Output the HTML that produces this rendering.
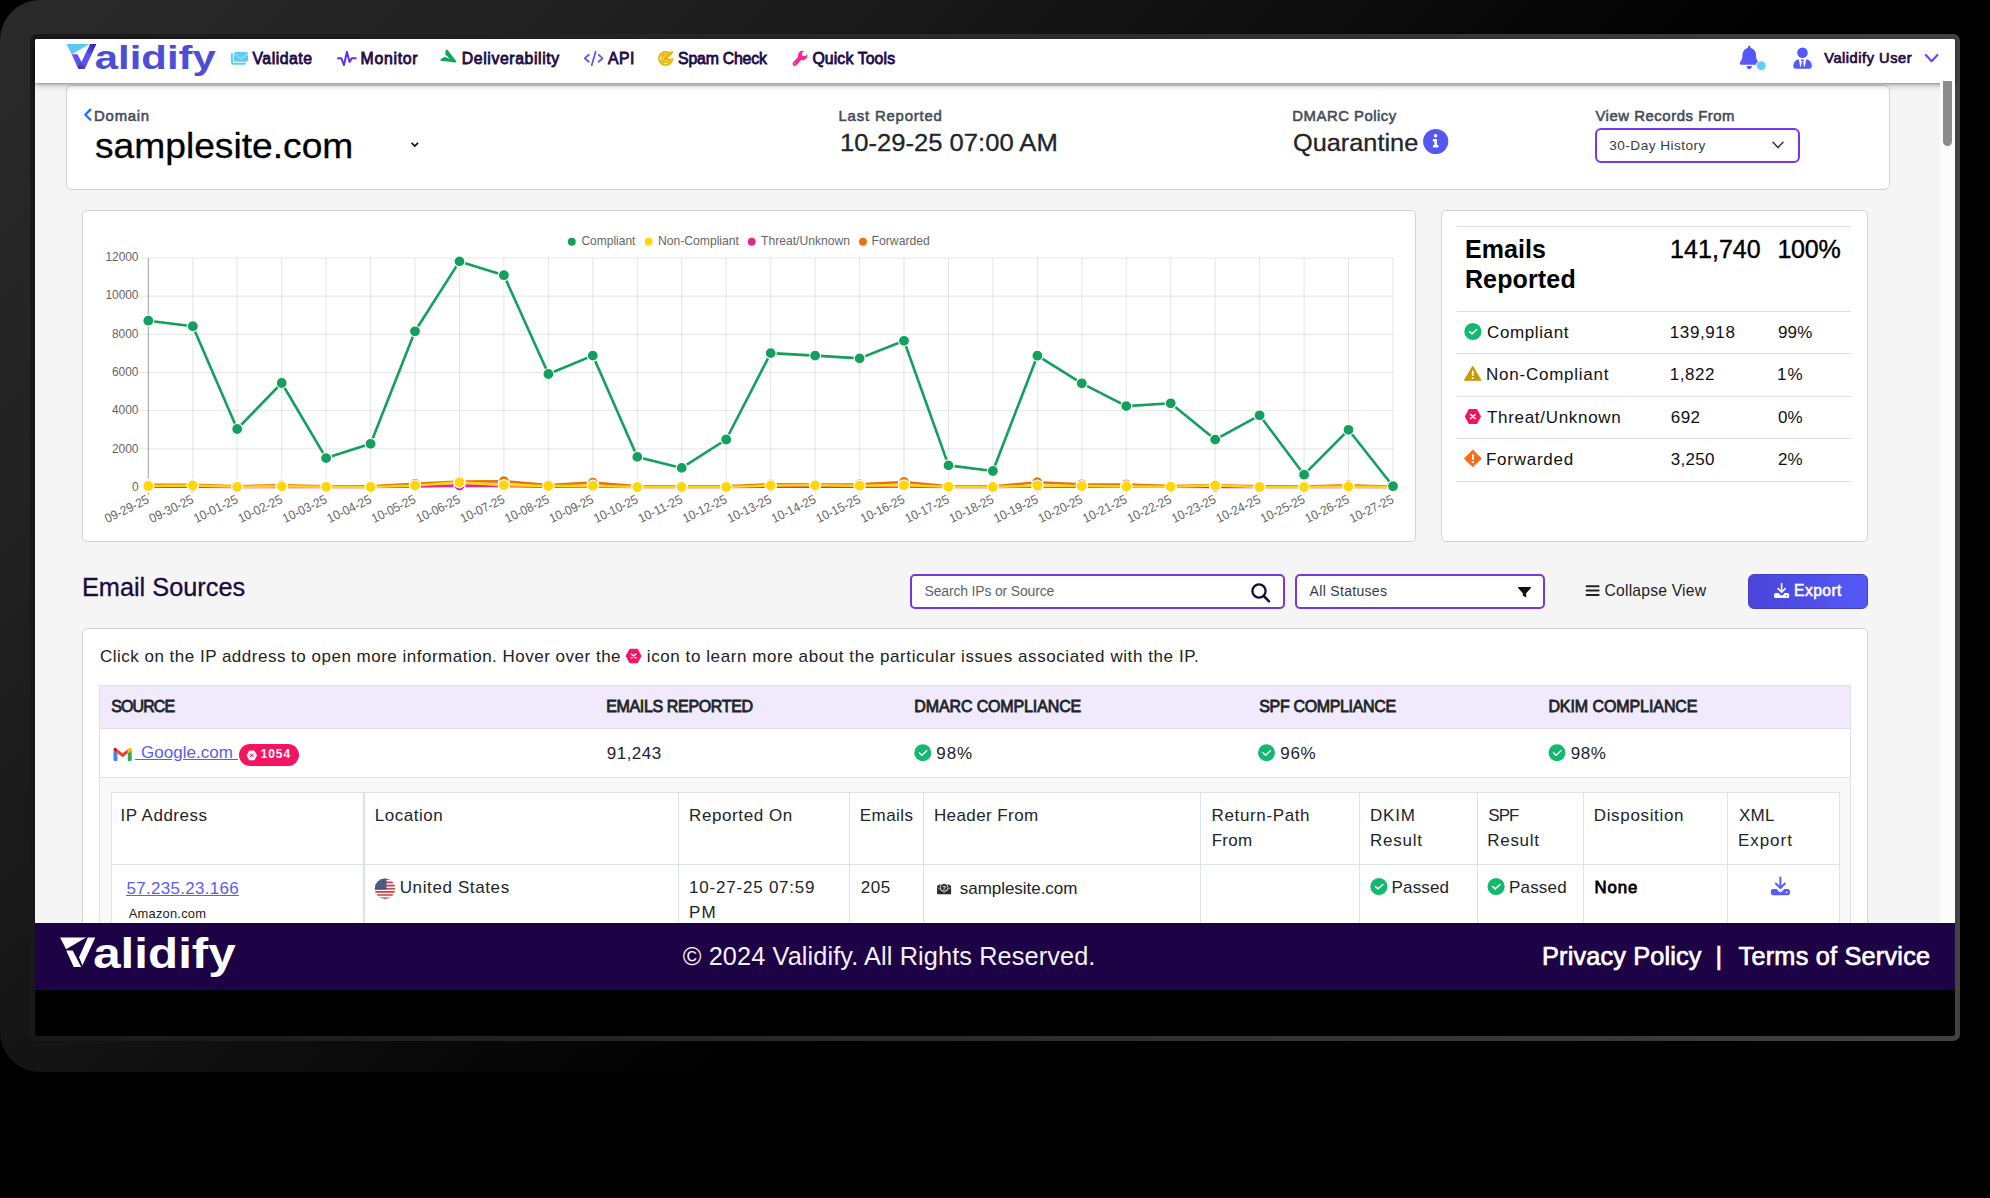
<!DOCTYPE html>
<html lang="en"><head><meta charset="utf-8"><title>Validify - DMARC Monitor</title>
<style>
*{box-sizing:border-box;margin:0;padding:0}
html,body{width:1990px;height:1198px;background:#000;overflow:hidden}
body{position:relative;font-family:"Liberation Sans",sans-serif;-webkit-font-smoothing:antialiased}
.abs{position:absolute;display:block}
.t{position:absolute;white-space:pre;line-height:1;font-family:"Liberation Sans",sans-serif}
.s3{-webkit-text-stroke:.3px currentColor}
.s4{-webkit-text-stroke:.4px currentColor}
.s5{-webkit-text-stroke:.55px currentColor}
.s6{-webkit-text-stroke:.7px currentColor}
.s7{-webkit-text-stroke:.8px currentColor}
.box{position:absolute;background:#fff;border:1px solid #d3d3d6;border-radius:6px}
.ln{position:absolute;background:#dee2e6}
</style></head>
<body>
<div class="abs" style="left:0px;top:0px;width:1962.0px;height:1072.0px;border-radius:40px 8px 8px 40px;background:linear-gradient(135deg,#2a2a2a 0%,#222 17%,#161616 33.5%,#080808 50%,#000 60%)"></div>
<div class="abs" style="left:30px;top:34px;width:1930.0px;height:1006.5px;border-radius:7px;background:linear-gradient(90deg,#181818 0%,#2c2c2c 50%,#424242 100%)"></div>
<div class="abs" style="left:35px;top:39px;width:1920.0px;height:996.5px;border-radius:2px;background:#000"></div>
<div class="abs" style="left:35px;top:39px;width:1920.0px;height:884.3px;background:#f5f5f5;border-radius:2px 2px 0 0"></div>
<div class="box" style="left:66px;top:85.4px;width:1824.0px;height:104.4px;"></div>
<div class="box" style="left:82.4px;top:209.6px;width:1333.6px;height:332.6px;border-radius:5px"></div>
<div class="box" style="left:1440.6px;top:209.6px;width:427.2px;height:332.6px;border-radius:5px"></div>
<div class="abs" style="left:1457px;top:225.8px;width:393.8px;height:1.2px;background:#dedee8"></div>
<div class="abs" style="left:1457px;top:310.9px;width:393.8px;height:1.2px;background:#dedee8"></div>
<div class="abs" style="left:1457px;top:352.9px;width:393.8px;height:1.2px;background:#dedee8"></div>
<div class="abs" style="left:1457px;top:395.9px;width:393.8px;height:1.2px;background:#dedee8"></div>
<div class="abs" style="left:1457px;top:438.0px;width:393.8px;height:1.2px;background:#dedee8"></div>
<div class="abs" style="left:1457px;top:481.0px;width:393.8px;height:1.2px;background:#dedee8"></div>
<div class="abs" style="left:1595px;top:128.1px;width:205.0px;height:34.6px;background:#fff;border:2px solid #7a35f2;border-radius:6px"></div>
<div class="abs" style="left:910px;top:574px;width:375.0px;height:34.6px;background:#fff;border:2px solid #7238e6;border-radius:5px"></div>
<div class="abs" style="left:1295px;top:574px;width:250.0px;height:34.6px;background:#fff;border:2px solid #7238e6;border-radius:5px"></div>
<div class="abs" style="left:1748.2px;top:574.1px;width:119.8px;height:34.5px;background:linear-gradient(90deg,#4a45d8,#5359f6);border:1px solid #4540c8;border-radius:6px"></div>
<div class="box" style="left:82.4px;top:627.6px;width:1785.6px;height:312.4px;border-radius:5px 5px 0 0"></div>
<div class="abs" style="left:99.3px;top:685.2px;width:1751.5px;height:44.1px;background:#f0eafc;border:1px solid #e2dcf0"></div>
<div class="abs" style="left:99.3px;top:729.3px;width:1751.5px;height:48.3px;background:#fff;border:1px solid #dee2e6;border-top:0"></div>
<div class="abs" style="left:99.3px;top:777.6px;width:1751.5px;height:152.4px;background:#f8f8f9;border:1px solid #dee2e6;border-top:0"></div>
<div class="abs" style="left:110.6px;top:792.4px;width:1729.2px;height:137.6px;background:#fff;border:1px solid #dee2e6"></div>
<div class="ln" style="left:110.6px;top:863.8px;width:1729.2px;height:1.2px;"></div>
<div class="ln" style="left:363.4px;top:792.4px;width:1.2px;height:137.6px;"></div>
<div class="ln" style="left:677.6px;top:792.4px;width:1.2px;height:137.6px;"></div>
<div class="ln" style="left:848.9px;top:792.4px;width:1.2px;height:137.6px;"></div>
<div class="ln" style="left:922.8px;top:792.4px;width:1.2px;height:137.6px;"></div>
<div class="ln" style="left:1199.9px;top:792.4px;width:1.2px;height:137.6px;"></div>
<div class="ln" style="left:1358.8000000000002px;top:792.4px;width:1.2px;height:137.6px;"></div>
<div class="ln" style="left:1476.7px;top:792.4px;width:1.2px;height:137.6px;"></div>
<div class="ln" style="left:1582.6000000000001px;top:792.4px;width:1.2px;height:137.6px;"></div>
<div class="ln" style="left:1726.8000000000002px;top:792.4px;width:1.2px;height:137.6px;"></div>
<div class="abs" style="left:135.2px;top:758.7px;width:36.8px;height:1.1px;background:#5b5cf2"></div>
<div class="abs" style="left:182.8px;top:758.7px;width:55.6px;height:1.1px;background:#5b5cf2"></div>
<div class="abs" style="left:126px;top:894.9px;width:113.0px;height:1.1px;background:#5b5cf2"></div>
<div class="abs" style="left:35px;top:923.3px;width:1920.0px;height:67.1px;background:#1d0245"></div>
<svg class="abs" style="left:84px;top:211px" width="1331" height="330" viewBox="84 211 1331 330" font-family="Liberation Sans, sans-serif">
<path d="M138.3 258.1H1393M138.3 296.2H1393M138.3 334.4H1393M138.3 372.6H1393M138.3 410.7H1393M138.3 448.9H1393M138.3 487.0H1393M148.3 258.1V495.0M192.8 258.1V495.0M237.2 258.1V495.0M281.7 258.1V495.0M326.1 258.1V495.0M370.6 258.1V495.0M415.0 258.1V495.0M459.5 258.1V495.0M503.9 258.1V495.0M548.4 258.1V495.0M592.8 258.1V495.0M637.3 258.1V495.0M681.7 258.1V495.0M726.2 258.1V495.0M770.7 258.1V495.0M815.1 258.1V495.0M859.6 258.1V495.0M904.0 258.1V495.0M948.5 258.1V495.0M992.9 258.1V495.0M1037.4 258.1V495.0M1081.8 258.1V495.0M1126.3 258.1V495.0M1170.7 258.1V495.0M1215.2 258.1V495.0M1259.6 258.1V495.0M1304.1 258.1V495.0M1348.5 258.1V495.0M1393.0 258.1V495.0" stroke="#000" stroke-opacity=".1" stroke-width="1" fill="none"/>
<path d="M148.3 258.1V495.0" stroke="#000" stroke-opacity=".3" stroke-width="1" fill="none"/>
<text x="105.4" y="260.9" font-size="12.8" fill="#666" textLength="33.1" lengthAdjust="spacingAndGlyphs">12000</text>
<text x="105.4" y="299.3" font-size="12.8" fill="#666" textLength="33.1" lengthAdjust="spacingAndGlyphs">10000</text>
<text x="112.0" y="337.7" font-size="12.8" fill="#666" textLength="26.5" lengthAdjust="spacingAndGlyphs">8000</text>
<text x="112.0" y="376.1" font-size="12.8" fill="#666" textLength="26.5" lengthAdjust="spacingAndGlyphs">6000</text>
<text x="112.0" y="414.4" font-size="12.8" fill="#666" textLength="26.5" lengthAdjust="spacingAndGlyphs">4000</text>
<text x="112.0" y="452.8" font-size="12.8" fill="#666" textLength="26.5" lengthAdjust="spacingAndGlyphs">2000</text>
<text x="131.9" y="491.2" font-size="12.8" fill="#666" textLength="6.6" lengthAdjust="spacingAndGlyphs">0</text>
<text transform="translate(148.1 498.4) rotate(-26)" x="-47.6" y="4.4" font-size="12.8" fill="#666" textLength="47.6" lengthAdjust="spacingAndGlyphs">09-29-25</text>
<text transform="translate(192.6 498.4) rotate(-26)" x="-47.6" y="4.4" font-size="12.8" fill="#666" textLength="47.6" lengthAdjust="spacingAndGlyphs">09-30-25</text>
<text transform="translate(237.0 498.4) rotate(-26)" x="-47.6" y="4.4" font-size="12.8" fill="#666" textLength="47.6" lengthAdjust="spacingAndGlyphs">10-01-25</text>
<text transform="translate(281.5 498.4) rotate(-26)" x="-47.6" y="4.4" font-size="12.8" fill="#666" textLength="47.6" lengthAdjust="spacingAndGlyphs">10-02-25</text>
<text transform="translate(325.9 498.4) rotate(-26)" x="-47.6" y="4.4" font-size="12.8" fill="#666" textLength="47.6" lengthAdjust="spacingAndGlyphs">10-03-25</text>
<text transform="translate(370.4 498.4) rotate(-26)" x="-47.6" y="4.4" font-size="12.8" fill="#666" textLength="47.6" lengthAdjust="spacingAndGlyphs">10-04-25</text>
<text transform="translate(414.8 498.4) rotate(-26)" x="-47.6" y="4.4" font-size="12.8" fill="#666" textLength="47.6" lengthAdjust="spacingAndGlyphs">10-05-25</text>
<text transform="translate(459.3 498.4) rotate(-26)" x="-47.6" y="4.4" font-size="12.8" fill="#666" textLength="47.6" lengthAdjust="spacingAndGlyphs">10-06-25</text>
<text transform="translate(503.7 498.4) rotate(-26)" x="-47.6" y="4.4" font-size="12.8" fill="#666" textLength="47.6" lengthAdjust="spacingAndGlyphs">10-07-25</text>
<text transform="translate(548.2 498.4) rotate(-26)" x="-47.6" y="4.4" font-size="12.8" fill="#666" textLength="47.6" lengthAdjust="spacingAndGlyphs">10-08-25</text>
<text transform="translate(592.6 498.4) rotate(-26)" x="-47.6" y="4.4" font-size="12.8" fill="#666" textLength="47.6" lengthAdjust="spacingAndGlyphs">10-09-25</text>
<text transform="translate(637.1 498.4) rotate(-26)" x="-47.6" y="4.4" font-size="12.8" fill="#666" textLength="47.6" lengthAdjust="spacingAndGlyphs">10-10-25</text>
<text transform="translate(681.5 498.4) rotate(-26)" x="-47.6" y="4.4" font-size="12.8" fill="#666" textLength="47.6" lengthAdjust="spacingAndGlyphs">10-11-25</text>
<text transform="translate(726.0 498.4) rotate(-26)" x="-47.6" y="4.4" font-size="12.8" fill="#666" textLength="47.6" lengthAdjust="spacingAndGlyphs">10-12-25</text>
<text transform="translate(770.5 498.4) rotate(-26)" x="-47.6" y="4.4" font-size="12.8" fill="#666" textLength="47.6" lengthAdjust="spacingAndGlyphs">10-13-25</text>
<text transform="translate(814.9 498.4) rotate(-26)" x="-47.6" y="4.4" font-size="12.8" fill="#666" textLength="47.6" lengthAdjust="spacingAndGlyphs">10-14-25</text>
<text transform="translate(859.4 498.4) rotate(-26)" x="-47.6" y="4.4" font-size="12.8" fill="#666" textLength="47.6" lengthAdjust="spacingAndGlyphs">10-15-25</text>
<text transform="translate(903.8 498.4) rotate(-26)" x="-47.6" y="4.4" font-size="12.8" fill="#666" textLength="47.6" lengthAdjust="spacingAndGlyphs">10-16-25</text>
<text transform="translate(948.3 498.4) rotate(-26)" x="-47.6" y="4.4" font-size="12.8" fill="#666" textLength="47.6" lengthAdjust="spacingAndGlyphs">10-17-25</text>
<text transform="translate(992.7 498.4) rotate(-26)" x="-47.6" y="4.4" font-size="12.8" fill="#666" textLength="47.6" lengthAdjust="spacingAndGlyphs">10-18-25</text>
<text transform="translate(1037.2 498.4) rotate(-26)" x="-47.6" y="4.4" font-size="12.8" fill="#666" textLength="47.6" lengthAdjust="spacingAndGlyphs">10-19-25</text>
<text transform="translate(1081.6 498.4) rotate(-26)" x="-47.6" y="4.4" font-size="12.8" fill="#666" textLength="47.6" lengthAdjust="spacingAndGlyphs">10-20-25</text>
<text transform="translate(1126.1 498.4) rotate(-26)" x="-47.6" y="4.4" font-size="12.8" fill="#666" textLength="47.6" lengthAdjust="spacingAndGlyphs">10-21-25</text>
<text transform="translate(1170.5 498.4) rotate(-26)" x="-47.6" y="4.4" font-size="12.8" fill="#666" textLength="47.6" lengthAdjust="spacingAndGlyphs">10-22-25</text>
<text transform="translate(1215.0 498.4) rotate(-26)" x="-47.6" y="4.4" font-size="12.8" fill="#666" textLength="47.6" lengthAdjust="spacingAndGlyphs">10-23-25</text>
<text transform="translate(1259.4 498.4) rotate(-26)" x="-47.6" y="4.4" font-size="12.8" fill="#666" textLength="47.6" lengthAdjust="spacingAndGlyphs">10-24-25</text>
<text transform="translate(1303.9 498.4) rotate(-26)" x="-47.6" y="4.4" font-size="12.8" fill="#666" textLength="47.6" lengthAdjust="spacingAndGlyphs">10-25-25</text>
<text transform="translate(1348.3 498.4) rotate(-26)" x="-47.6" y="4.4" font-size="12.8" fill="#666" textLength="47.6" lengthAdjust="spacingAndGlyphs">10-26-25</text>
<text transform="translate(1392.8 498.4) rotate(-26)" x="-47.6" y="4.4" font-size="12.8" fill="#666" textLength="47.6" lengthAdjust="spacingAndGlyphs">10-27-25</text>
<polyline points="148.3,484.8 192.8,484.8 237.2,486.3 281.7,485.2 326.1,486.2 370.6,486.2 415.0,483.8 459.5,481.6 503.9,481.2 548.4,485 592.8,482.6 637.3,486.2 681.7,486.5 726.2,486.3 770.7,484.3 815.1,484.6 859.6,484.2 904.0,482 948.5,486.3 992.9,486.5 1037.4,482.2 1081.8,484.3 1126.3,484.5 1170.7,486 1215.2,485.4 1259.6,486.3 1304.1,486.5 1348.5,485.2 1393.0,486.8" fill="none" stroke="#e8710a" stroke-width="2.6" stroke-linejoin="round"/><g fill="#e8710a" stroke="#fff" stroke-width="1.2"><circle cx="148.3" cy="484.8" r="5.5"/><circle cx="192.8" cy="484.8" r="5.5"/><circle cx="237.2" cy="486.3" r="5.5"/><circle cx="281.7" cy="485.2" r="5.5"/><circle cx="326.1" cy="486.2" r="5.5"/><circle cx="370.6" cy="486.2" r="5.5"/><circle cx="415.0" cy="483.8" r="5.5"/><circle cx="459.5" cy="481.6" r="5.5"/><circle cx="503.9" cy="481.2" r="5.5"/><circle cx="548.4" cy="485" r="5.5"/><circle cx="592.8" cy="482.6" r="5.5"/><circle cx="637.3" cy="486.2" r="5.5"/><circle cx="681.7" cy="486.5" r="5.5"/><circle cx="726.2" cy="486.3" r="5.5"/><circle cx="770.7" cy="484.3" r="5.5"/><circle cx="815.1" cy="484.6" r="5.5"/><circle cx="859.6" cy="484.2" r="5.5"/><circle cx="904.0" cy="482" r="5.5"/><circle cx="948.5" cy="486.3" r="5.5"/><circle cx="992.9" cy="486.5" r="5.5"/><circle cx="1037.4" cy="482.2" r="5.5"/><circle cx="1081.8" cy="484.3" r="5.5"/><circle cx="1126.3" cy="484.5" r="5.5"/><circle cx="1170.7" cy="486" r="5.5"/><circle cx="1215.2" cy="485.4" r="5.5"/><circle cx="1259.6" cy="486.3" r="5.5"/><circle cx="1304.1" cy="486.5" r="5.5"/><circle cx="1348.5" cy="485.2" r="5.5"/><circle cx="1393.0" cy="486.8" r="5.5"/></g>
<polyline points="148.3,486.7 192.8,486.7 237.2,487 281.7,486.9 326.1,487 370.6,487 415.0,486.4 459.5,485.6 503.9,486 548.4,486.7 592.8,486.5 637.3,487 681.7,487 726.2,487 770.7,486.6 815.1,486.6 859.6,486.6 904.0,486.4 948.5,487 992.9,487 1037.4,486.5 1081.8,486.7 1126.3,486.8 1170.7,486.6 1215.2,486.9 1259.6,487 1304.1,487 1348.5,486.9 1393.0,487" fill="none" stroke="#e52592" stroke-width="2.6" stroke-linejoin="round"/><g fill="#e52592" stroke="#fff" stroke-width="1.2"><circle cx="148.3" cy="486.7" r="5.5"/><circle cx="192.8" cy="486.7" r="5.5"/><circle cx="237.2" cy="487" r="5.5"/><circle cx="281.7" cy="486.9" r="5.5"/><circle cx="326.1" cy="487" r="5.5"/><circle cx="370.6" cy="487" r="5.5"/><circle cx="415.0" cy="486.4" r="5.5"/><circle cx="459.5" cy="485.6" r="5.5"/><circle cx="503.9" cy="486" r="5.5"/><circle cx="548.4" cy="486.7" r="5.5"/><circle cx="592.8" cy="486.5" r="5.5"/><circle cx="637.3" cy="487" r="5.5"/><circle cx="681.7" cy="487" r="5.5"/><circle cx="726.2" cy="487" r="5.5"/><circle cx="770.7" cy="486.6" r="5.5"/><circle cx="815.1" cy="486.6" r="5.5"/><circle cx="859.6" cy="486.6" r="5.5"/><circle cx="904.0" cy="486.4" r="5.5"/><circle cx="948.5" cy="487" r="5.5"/><circle cx="992.9" cy="487" r="5.5"/><circle cx="1037.4" cy="486.5" r="5.5"/><circle cx="1081.8" cy="486.7" r="5.5"/><circle cx="1126.3" cy="486.8" r="5.5"/><circle cx="1170.7" cy="486.6" r="5.5"/><circle cx="1215.2" cy="486.9" r="5.5"/><circle cx="1259.6" cy="487" r="5.5"/><circle cx="1304.1" cy="487" r="5.5"/><circle cx="1348.5" cy="486.9" r="5.5"/><circle cx="1393.0" cy="487" r="5.5"/></g>
<polyline points="148.3,486 192.8,485.5 237.2,486.8 281.7,486.4 326.1,486.8 370.6,487 415.0,485.5 459.5,482.3 503.9,485.1 548.4,486 592.8,485.7 637.3,487 681.7,487 726.2,487 770.7,485.5 815.1,485.3 859.6,485.7 904.0,485.3 948.5,486.8 992.9,487 1037.4,485.5 1081.8,486 1126.3,486.4 1170.7,486.8 1215.2,485.5 1259.6,487 1304.1,487 1348.5,486.6 1393.0,487" fill="none" stroke="#ffd60a" stroke-width="2.6" stroke-linejoin="round"/><g fill="#ffd60a" stroke="#fff" stroke-width="1.2"><circle cx="148.3" cy="486" r="5.5"/><circle cx="192.8" cy="485.5" r="5.5"/><circle cx="237.2" cy="486.8" r="5.5"/><circle cx="281.7" cy="486.4" r="5.5"/><circle cx="326.1" cy="486.8" r="5.5"/><circle cx="370.6" cy="487" r="5.5"/><circle cx="415.0" cy="485.5" r="5.5"/><circle cx="459.5" cy="482.3" r="5.5"/><circle cx="503.9" cy="485.1" r="5.5"/><circle cx="548.4" cy="486" r="5.5"/><circle cx="592.8" cy="485.7" r="5.5"/><circle cx="637.3" cy="487" r="5.5"/><circle cx="681.7" cy="487" r="5.5"/><circle cx="726.2" cy="487" r="5.5"/><circle cx="770.7" cy="485.5" r="5.5"/><circle cx="815.1" cy="485.3" r="5.5"/><circle cx="859.6" cy="485.7" r="5.5"/><circle cx="904.0" cy="485.3" r="5.5"/><circle cx="948.5" cy="486.8" r="5.5"/><circle cx="992.9" cy="487" r="5.5"/><circle cx="1037.4" cy="485.5" r="5.5"/><circle cx="1081.8" cy="486" r="5.5"/><circle cx="1126.3" cy="486.4" r="5.5"/><circle cx="1170.7" cy="486.8" r="5.5"/><circle cx="1215.2" cy="485.5" r="5.5"/><circle cx="1259.6" cy="487" r="5.5"/><circle cx="1304.1" cy="487" r="5.5"/><circle cx="1348.5" cy="486.6" r="5.5"/><circle cx="1393.0" cy="487" r="5.5"/></g>
<polyline points="148.3,320.7 192.8,326.2 237.2,429 281.7,383 326.1,458.1 370.6,443.8 415.0,331.3 459.5,261.4 503.9,275.2 548.4,374 592.8,355.6 637.3,456.9 681.7,467.9 726.2,439.5 770.7,353.1 815.1,355.6 859.6,358.4 904.0,340.8 948.5,465.4 992.9,471 1037.4,355.7 1081.8,383.3 1126.3,406.1 1170.7,403.3 1215.2,439.6 1259.6,415.3 1304.1,474.7 1348.5,429.8 1393.0,486.2" fill="none" stroke="#12a05c" stroke-width="2.6" stroke-linejoin="round"/><g fill="#12a05c" stroke="#fff" stroke-width="1.2"><circle cx="148.3" cy="320.7" r="5.5"/><circle cx="192.8" cy="326.2" r="5.5"/><circle cx="237.2" cy="429" r="5.5"/><circle cx="281.7" cy="383" r="5.5"/><circle cx="326.1" cy="458.1" r="5.5"/><circle cx="370.6" cy="443.8" r="5.5"/><circle cx="415.0" cy="331.3" r="5.5"/><circle cx="459.5" cy="261.4" r="5.5"/><circle cx="503.9" cy="275.2" r="5.5"/><circle cx="548.4" cy="374" r="5.5"/><circle cx="592.8" cy="355.6" r="5.5"/><circle cx="637.3" cy="456.9" r="5.5"/><circle cx="681.7" cy="467.9" r="5.5"/><circle cx="726.2" cy="439.5" r="5.5"/><circle cx="770.7" cy="353.1" r="5.5"/><circle cx="815.1" cy="355.6" r="5.5"/><circle cx="859.6" cy="358.4" r="5.5"/><circle cx="904.0" cy="340.8" r="5.5"/><circle cx="948.5" cy="465.4" r="5.5"/><circle cx="992.9" cy="471" r="5.5"/><circle cx="1037.4" cy="355.7" r="5.5"/><circle cx="1081.8" cy="383.3" r="5.5"/><circle cx="1126.3" cy="406.1" r="5.5"/><circle cx="1170.7" cy="403.3" r="5.5"/><circle cx="1215.2" cy="439.6" r="5.5"/><circle cx="1259.6" cy="415.3" r="5.5"/><circle cx="1304.1" cy="474.7" r="5.5"/><circle cx="1348.5" cy="429.8" r="5.5"/><circle cx="1393.0" cy="486.2" r="5.5"/></g>
<circle cx="571.8" cy="241.8" r="3.95" fill="#12a05c"/>
<circle cx="648.7" cy="241.8" r="3.95" fill="#ffd60a"/>
<circle cx="751.7" cy="241.8" r="3.95" fill="#e52592"/>
<circle cx="863" cy="241.8" r="3.95" fill="#e8710a"/>
<text x="581.4" y="245" font-size="12.8" fill="#666" textLength="54.0" lengthAdjust="spacingAndGlyphs">Compliant</text>
<text x="658.0" y="245" font-size="12.8" fill="#666" textLength="80.9" lengthAdjust="spacingAndGlyphs">Non-Compliant</text>
<text x="761.1" y="245" font-size="12.8" fill="#666" textLength="88.8" lengthAdjust="spacingAndGlyphs">Threat/Unknown</text>
<text x="871.6" y="245" font-size="12.8" fill="#666" textLength="58.2" lengthAdjust="spacingAndGlyphs">Forwarded</text>
</svg>
<div class="abs" style="left:35px;top:39px;width:1920px;height:44px;background:#fff;border-radius:2px 2px 0 0;box-shadow:0 1px 3px rgba(0,0,0,.3),0 3px 6px rgba(0,0,0,.2)"></div>
<div class="abs" style="left:1940px;top:83px;width:15.0px;height:840.3px;background:#fcfcfc"></div>
<div class="abs" style="left:1943.2px;top:81px;width:8.7px;height:65.0px;background:#8b8b8b;border-radius:0 0 4.5px 4.5px"></div>
<svg class="abs" style="left:60px;top:40px" width="170" height="42" viewBox="60 40 170 42" ><defs><linearGradient id="lg1" gradientUnits="userSpaceOnUse" x1="96" y1="44" x2="81" y2="69"><stop offset="0" stop-color="#33229a"/><stop offset=".5" stop-color="#5258f8"/><stop offset=".8" stop-color="#6a4ce8"/><stop offset="1" stop-color="#3b2a9c"/></linearGradient>
<linearGradient id="lg2" gradientUnits="userSpaceOnUse" x1="72" y1="54" x2="82" y2="69"><stop offset="0" stop-color="#7a4cf0"/><stop offset=".6" stop-color="#4f55f5"/><stop offset="1" stop-color="#3a2a9a"/></linearGradient></defs><polygon points="66.4,44 89.6,44 71.7,54.4" fill="#5bc9f5"/>
<polygon points="71.7,54.3 77.5,54.3 84.9,68.8 78.3,68.8" fill="url(#lg2)"/>
<polygon points="90.2,44 96.4,44 84.9,68.8 78.1,68.8" fill="url(#lg1)"/>
<text x="94.8" y="68.9" font-family="Liberation Sans, sans-serif" font-weight="700" font-size="33.9" fill="#4e4dd8" textLength="121" lengthAdjust="spacingAndGlyphs">alidify</text></svg>
<svg class="abs" style="left:56px;top:930px" width="190" height="54" viewBox="56 930 190 54" ><polygon points="60.1,937.5 86.2,937.5 66.1,949.2" fill="#fff"/>
<polygon points="66.2,950.6 72.7,950.6 81.2,966.9 73.7,966.9" fill="#fff"/>
<polygon points="87.8,937.5 95.3,937.5 82.4,965.4 79.1,957.2" fill="#fff"/>
<text x="93.2" y="967.5" font-family="Liberation Sans, sans-serif" font-weight="700" font-size="41.6" fill="#fff" textLength="142.5" lengthAdjust="spacingAndGlyphs">alidify</text></svg>
<svg class="abs" style="left:228px;top:48px" width="24" height="20" viewBox="228 48 24 20" ><rect x="233.9" y="51.9" width="14.1" height="9.9" rx="1.7" fill="#5ccbf5"/>
<path d="M234 54.1 L240.9 58.7 L248 54.1" stroke="#fff" stroke-opacity=".75" stroke-width=".75" fill="none"/>
<path d="M231.9 54.2 V61.4 a2.4 2.4 0 0 0 2.4 2.4 H244.8" stroke="#5ccbf5" stroke-width="2" stroke-linecap="round" fill="none"/></svg>
<svg class="abs" style="left:334px;top:48px" width="26" height="20" viewBox="334 48 26 20" ><path d="M338 58.2 H341.2 L344 65 L346.9 51.7 L349.6 62 L351.8 58.2 H355.7" stroke="#6232e6" stroke-width="2" stroke-linecap="round" stroke-linejoin="round" fill="none"/></svg>
<svg class="abs" style="left:436px;top:46px" width="24" height="20" viewBox="436 46 24 20" ><path d="M445.8 50 Q446.8 49 447.8 50.3 L456.3 61.2 Q456.9 62.6 455.3 62.5 L441 60.8 Q439.6 60.3 440.6 59.2 L443.8 57.2 Q444.8 56.7 445.8 57.2 L449.9 59 L445.6 54.8 Q445.2 54.2 445.3 53.5 Z" fill="#0fa460"/></svg>
<svg class="abs" style="left:582px;top:48px" width="24" height="20" viewBox="582 48 24 20" ><path d="M588.8 54.8 L584.7 58.4 L588.8 61.8 M595.6 51.7 L591.8 65.1 M598.7 54.8 L602.6 58.4 L598.7 61.8" stroke="#5558f8" stroke-width="1.8" stroke-linecap="round" stroke-linejoin="round" fill="none"/></svg>
<svg class="abs" style="left:655px;top:47px" width="24" height="22" viewBox="655 47 24 22" ><circle cx="665.7" cy="58.5" r="7.6" fill="#e6b400"/>
<polygon points="667.8,57.4 674.5,52.8 674.5,58.1 668.4,58.7" fill="#fff"/>
<circle cx="665.7" cy="58.5" r="5.2" fill="none" stroke="#fff" stroke-opacity=".85" stroke-width=".7" stroke-dasharray="2.2 .8" transform="rotate(35 665.7 58.5)" pathLength="40" />
<circle cx="665.7" cy="58.5" r="2.8" fill="none" stroke="#fff" stroke-opacity=".8" stroke-width=".65" stroke-dasharray="11 5" transform="rotate(60 665.7 58.5)"/>
<polygon points="665.7,58.5 673.5,50.5 675,56.5" fill="#e6b400" opacity="0"/>
<path d="M666 58.2 L672.1 52" stroke="#e6b400" stroke-width="2.4" stroke-linecap="round"/>
<path d="M660.6 56.9 l.9 1.5 -.9 1.5 -.9 -1.5z M665.7 62.7 l1.5 .9 -1.5 .9 -1.5 -.9z" fill="#fff"/></svg>
<svg class="abs" style="left:790px;top:48px" width="22" height="20" viewBox="790 48 22 20" ><path d="M794.7 63.7 L801.3 56.8" stroke="#ff2295" stroke-width="4.3" stroke-linecap="round"/>
<circle cx="802.7" cy="55.5" r="4.7" fill="#ff2295"/>
<circle cx="804.2" cy="54" r="2.3" fill="#fff"/>
<path d="M804.2 54 L808.5 49.5" stroke="#fff" stroke-width="4.4"/>
<circle cx="794.6" cy="63.6" r=".65" fill="#fff"/></svg>
<svg class="abs" style="left:1736px;top:43px" width="34" height="30" viewBox="1736 43 34 30" ><g transform="translate(1739.7 45.7) scale(0.0426 0.0455)"><path d="M224 0c-17.7 0-32 14.300-32 32V51.200C119 66 64 130.600 64 208v18.800c0 47-17.300 92.400-48.500 127.600l-7.400 8.300c-8.400 9.400-10.400 22.900-5.300 34.400S19.400 416 32 416H416c12.600 0 24-7.400 29.200-18.900s3.100-25-5.300-34.400l-7.400-8.300C401.300 319.200 384 273.900 384 226.800V208c0-77.400-55-142-128-156.800V32c0-17.700-14.300-32-32-32zm45.300 493.300c12-12 18.700-28.300 18.700-45.300H224 160c0 17 6.700 33.300 18.700 45.300s28.300 18.700 45.300 18.700s33.300-6.700 45.300-18.700z" fill="#5558fa"/></g>
<circle cx="1761.3" cy="65.8" r="5.5" fill="#fff"/><circle cx="1761.3" cy="65.8" r="4.5" fill="#62d0f5"/></svg>
<svg class="abs" style="left:1790px;top:45px" width="26" height="26" viewBox="1790 45 26 26" ><circle cx="1802.5" cy="52.8" r="5.3" fill="#5558fa"/>
<path d="M1793.3 66.3 C1793.3 62 1796.2 59.3 1799.6 59.3 H1805.4 C1808.9 59.3 1811.8 62 1811.8 66.3 Q1811.8 68.8 1809.4 68.8 H1795.7 Q1793.3 68.8 1793.3 66.3 Z" fill="#5558fa"/>
<polygon points="1798.7,59.1 1806.3,59.1 1804.7,67 1800.3,67" fill="#fff"/>
<rect x="1801" y="59.4" width="3" height="1.9" rx=".5" fill="#5558fa"/>
<polygon points="1802,61.4 1803,61.4 1804.4,68 1800.6,68" fill="#5558fa"/></svg>
<svg class="abs" style="left:1922px;top:50px" width="20" height="16" viewBox="1922 50 20 16" ><path d="M1925.8 55 L1931.6 61.2 L1937.4 55" stroke="#7a3ff0" stroke-width="2.1" stroke-linecap="round" stroke-linejoin="round" fill="none"/></svg>
<svg class="abs" style="left:80px;top:104px" width="16" height="22" viewBox="80 104 16 22" ><path d="M90.4 109.6 L85.3 114.7 L90.4 119.7" stroke="#1a6dff" stroke-width="2.2" stroke-linecap="round" stroke-linejoin="round" fill="none"/></svg>
<svg class="abs" style="left:406px;top:138px" width="18" height="14" viewBox="406 138 18 14" ><path d="M411.6 142.8 L414.8 146 L418 142.8" stroke="#111" stroke-width="1.7" fill="none"/></svg>
<svg class="abs" style="left:1420px;top:126px" width="32" height="32" viewBox="1420 126 32 32" ><circle cx="1435.7" cy="141.5" r="12.6" fill="#5558f0"/>
<circle cx="1435.6" cy="135.8" r="1.75" fill="#fff"/>
<path d="M1432.9 139 H1436.9 V145 H1438.4 V147.4 H1432.9 V145 H1434.4 V141.4 H1432.9 Z" fill="#fff"/></svg>
<svg class="abs" style="left:1768px;top:138px" width="20" height="14" viewBox="1768 138 20 14" ><path d="M1773 142.3 L1778 147.6 L1783 142.3" stroke="#333" stroke-width="1.5" stroke-linecap="round" stroke-linejoin="round" fill="none"/></svg>
<svg class="abs" style="left:1460px;top:320px" width="26" height="150" viewBox="1460 320 26 150" ><circle cx="1472.9" cy="331.5" r="8.6" fill="#12b96f"/><path d="M1469.4 331.5 L1472.0 333.9 L1476.8 329.5" stroke="#fff" stroke-width="1.5" stroke-linecap="round" stroke-linejoin="round" fill="none"/><path d="M1472.7 366.6 L1480.7 380.2 H1464.6 Z" fill="#c79a00" stroke="#c79a00" stroke-width="1.2" stroke-linejoin="round"/><rect x="1471.9" y="370.6" width="1.7" height="5.4" rx=".4" fill="#fff"/><rect x="1471.8" y="377.2" width="1.9" height="1.9" rx=".3" fill="#fff"/><polygon points="1465.4,416.5 1469.2,409.5 1476.6,409.5 1480.4,416.5 1476.6,423.5 1469.2,423.5" fill="#f6135f" stroke="#f6135f" stroke-width="1.1" stroke-linejoin="round"/><path d="M1470.6 414.5 L1475.2 418.5 M1475.2 414.5 L1470.6 418.5" stroke="#fff" stroke-width="1.6" stroke-linecap="round"/><path d="M1472.9 450.5 L1480.9 458.5 L1472.9 466.4 L1464.8 458.5 Z" fill="#ff6a1a" stroke="#ff6a1a" stroke-width="1.2" stroke-linejoin="round"/><rect x="1472" y="454" width="1.8" height="6" rx=".6" fill="#fff"/><rect x="1471.8" y="461.2" width="2.2" height="1.8" rx=".3" fill="#fff"/></svg>
<svg class="abs" style="left:622px;top:646px" width="24" height="22" viewBox="622 646 24 22" ><polygon points="626.3,656.0 630.0,649.2 637.2,649.2 640.9,656.0 637.2,662.8 630.0,662.8" fill="#f6135f" stroke="#f6135f" stroke-width="1.1" stroke-linejoin="round"/><path d="M631.4 654.0 L635.9 658.0 M635.9 654.0 L631.4 658.0" stroke="#fff" stroke-width="1.5" stroke-linecap="round"/></svg>
<svg class="abs" style="left:910px;top:742px" width="26" height="22" viewBox="910 742 26 22" ><circle cx="922.8" cy="752.8" r="8.5" fill="#12b96f"/><path d="M919.3 752.8 L921.9 755.2 L926.7 750.8" stroke="#fff" stroke-width="1.5" stroke-linecap="round" stroke-linejoin="round" fill="none"/></svg>
<svg class="abs" style="left:1254px;top:742px" width="26" height="22" viewBox="1254 742 26 22" ><circle cx="1266.5" cy="752.8" r="8.5" fill="#12b96f"/><path d="M1263.0 752.8 L1265.6 755.2 L1270.4 750.8" stroke="#fff" stroke-width="1.5" stroke-linecap="round" stroke-linejoin="round" fill="none"/></svg>
<svg class="abs" style="left:1544px;top:742px" width="26" height="22" viewBox="1544 742 26 22" ><circle cx="1557" cy="752.8" r="8.5" fill="#12b96f"/><path d="M1553.5 752.8 L1556.1 755.2 L1560.9 750.8" stroke="#fff" stroke-width="1.5" stroke-linecap="round" stroke-linejoin="round" fill="none"/></svg>
<svg class="abs" style="left:1366px;top:875px" width="26" height="22" viewBox="1366 875 26 22" ><circle cx="1378.9" cy="886.5" r="8.6" fill="#12b96f"/><path d="M1375.4 886.5 L1378.0 888.9 L1382.8 884.5" stroke="#fff" stroke-width="1.5" stroke-linecap="round" stroke-linejoin="round" fill="none"/></svg>
<svg class="abs" style="left:1483px;top:875px" width="26" height="22" viewBox="1483 875 26 22" ><circle cx="1496.1" cy="886.5" r="8.6" fill="#12b96f"/><path d="M1492.6 886.5 L1495.2 888.9 L1500.0 884.5" stroke="#fff" stroke-width="1.5" stroke-linecap="round" stroke-linejoin="round" fill="none"/></svg>
<svg class="abs" style="left:1246px;top:580px" width="28" height="26" viewBox="1246 580 28 26" ><circle cx="1259" cy="591" r="6.6" fill="none" stroke="#1a0b3e" stroke-width="2.3"/><path d="M1263.8 596 L1269 601.3" stroke="#1a0b3e" stroke-width="2.5" stroke-linecap="round"/></svg>
<svg class="abs" style="left:1514px;top:584px" width="20" height="16" viewBox="1514 584 20 16" ><path d="M1518.4 586.9 H1530.6 Q1531.3 587.5 1530.7 588.3 L1526.2 593.2 V597.6 L1522.8 595.5 V593.2 L1518.3 588.3 Q1517.7 587.5 1518.4 586.9 Z" fill="#111"/></svg>
<svg class="abs" style="left:1584px;top:583px" width="18" height="16" viewBox="1584 583 18 16" ><path d="M1586.6 586.2 H1598.6 M1586.6 590.6 H1598.6 M1586.6 595 H1598.6" stroke="#222" stroke-width="2" stroke-linecap="round"/></svg>
<svg class="abs" style="left:1772px;top:581px" width="20" height="20" viewBox="1772 581 20 20"><g transform="translate(1774 583) scale(0.8)"><path d="M9.5 1 V11 M5 7 L9.5 11.6 L14 7" stroke="#fff" stroke-width="2" stroke-linecap="round" stroke-linejoin="round" fill="none"/><path d="M2 12.6 H5.6 L8.3 15.2 Q9.5 16.2 10.7 15.2 L13.4 12.6 H17 Q19 12.6 19 14.6 V16.8 Q19 18.8 17 18.8 H2 Q0 18.8 0 16.8 V14.6 Q0 12.6 2 12.6 Z" fill="#fff"/><circle cx="15.6" cy="15.8" r=".9" fill="#4d4be0"/></g></svg>
<svg class="abs" style="left:1768px;top:874px" width="24" height="24" viewBox="1768 874 24 24" ><g transform="translate(1770.9 876.5) scale(1.0)"><path d="M9.5 1 V11 M5 7 L9.5 11.6 L14 7" stroke="#5a5cf5" stroke-width="2" stroke-linecap="round" stroke-linejoin="round" fill="none"/><path d="M2 12.6 H5.6 L8.3 15.2 Q9.5 16.2 10.7 15.2 L13.4 12.6 H17 Q19 12.6 19 14.6 V16.8 Q19 18.8 17 18.8 H2 Q0 18.8 0 16.8 V14.6 Q0 12.6 2 12.6 Z" fill="#5a5cf5"/><circle cx="15.6" cy="15.8" r=".9" fill="#fff" fill-opacity=".85"/></g></svg>
<svg class="abs" style="left:112px;top:746px" width="22" height="17" viewBox="112 746 22 17" ><path d="M113.5 750.2 V759.8 Q113.5 761 114.7 761 H117.4 V753.2 Z" fill="#4285f4"/>
<path d="M131.7 750.2 V759.8 Q131.7 761 130.5 761 H127.8 V753.2 Z" fill="#34a853"/>
<path d="M117.4 753.2 V749.3 L122.6 753.3 L127.8 749.3 V753.2 L122.6 757.2 Z" fill="#ea4335"/>
<path d="M113.5 750.2 V749.4 Q113.5 747.6 115.3 747.8 Q116 747.9 116.6 748.5 L117.4 749.3 V753.2 Z" fill="#c5221f"/>
<path d="M131.7 750.2 V749.4 Q131.7 747.6 129.9 747.8 Q129.2 747.9 128.6 748.5 L127.8 749.3 V753.2 Z" fill="#fbbc04"/></svg>
<div class="abs" style="left:239.1px;top:744.1px;width:59.8px;height:21.6px;border-radius:11px;background:#f5145f"></div>
<svg class="abs" style="left:244px;top:748px" width="16" height="15" viewBox="244 748 16 15" ><polygon points="246.9,755.4 249.4,750.9 254.2,750.9 256.7,755.4 254.2,759.9 249.4,759.9" fill="#fff" stroke="#fff" stroke-width="0.7" stroke-linejoin="round"/><path d="M250.3 754.2 L253.3 756.6 M253.3 754.2 L250.3 756.6" stroke="#f5145f" stroke-width="1.0" stroke-linecap="round"/></svg>
<svg class="abs" style="left:373px;top:877px" width="24" height="24" viewBox="373 877 24 24" ><defs><clipPath id="fc"><circle cx="385" cy="888.7" r="10.2"/></clipPath></defs>
<g clip-path="url(#fc)"><rect x="374" y="878" width="22" height="22" fill="#f5f5f5"/>
<path d="M374 879.3H396 M374 882.4H396 M374 885.6H396 M374 888.7H396 M374 891.9H396 M374 895H396 M374 898.2H396" stroke="#c8414b" stroke-width="1.6"/>
<rect x="374" y="878" width="12.4" height="11.6" fill="#46517f"/>
<path d="M375 880H386 M375 882.3H386 M375 884.6H386 M375 886.9H386" stroke="#8891b5" stroke-width=".7" stroke-dasharray=".8 1"/></g></svg>
<svg class="abs" style="left:935px;top:881px" width="18" height="15" viewBox="935 881 18 15" ><path d="M937.1 886 L939.6 884.6 H948.6 L951.1 886 V894.2 H937.1 Z" fill="#2a2a2a"/>
<circle cx="944.1" cy="887.4" r="3.9" fill="#2a2a2a" stroke="#fff" stroke-width=".8"/>
<text x="944.1" y="889.6" font-size="6" font-weight="700" font-family="Liberation Sans, sans-serif" fill="#fff" text-anchor="middle">?</text>
<path d="M937.5 887.6 L944.1 892.4 L950.7 887.6" stroke="#fff" stroke-width=".6" fill="none" stroke-opacity=".8"/></svg>
<div class="t s7" style="left:252.5px;top:51px;font-size:15.8px;color:#1f0b47;letter-spacing:0.50px;">Validate</div>
<div class="t s7" style="left:360.6px;top:51px;font-size:15.8px;color:#1f0b47;letter-spacing:0.71px;">Monitor</div>
<div class="t s7" style="left:461.8px;top:51px;font-size:15.8px;color:#1f0b47;letter-spacing:0.60px;">Deliverability</div>
<div class="t s7" style="left:608.0px;top:51px;font-size:15.8px;color:#1f0b47;letter-spacing:0.41px;">API</div>
<div class="t s7" style="left:678.1px;top:51px;font-size:15.8px;color:#1f0b47;letter-spacing:-0.19px;">Spam Check</div>
<div class="t s7" style="left:812.4px;top:51px;font-size:15.8px;color:#1f0b47;letter-spacing:0.13px;">Quick Tools</div>
<div class="t s6" style="left:1824.2px;top:51px;font-size:14.6px;color:#1f0b47;letter-spacing:0.54px;">Validify User</div>
<div class="t s5" style="left:94.1px;top:109px;font-size:14.9px;color:#454c58;letter-spacing:0.75px;">Domain</div>
<div class="t s3" style="left:95.0px;top:129px;font-size:35.8px;color:#000;transform:scaleX(1.0388);transform-origin:0 0;">samplesite.com</div>
<div class="t s5" style="left:838.5px;top:109px;font-size:14.9px;color:#454c58;letter-spacing:0.82px;">Last Reported</div>
<div class="t s3" style="left:839.7px;top:131px;font-size:24.3px;color:#212529;transform:scaleX(1.0536);transform-origin:0 0;">10-29-25 07:00 AM</div>
<div class="t s5" style="left:1292.3px;top:109px;font-size:14.9px;color:#454c58;letter-spacing:0.50px;">DMARC Policy</div>
<div class="t s3" style="left:1292.5px;top:131px;font-size:24.6px;color:#212529;transform:scaleX(1.0291);transform-origin:0 0;">Quarantine</div>
<div class="t s5" style="left:1595.4px;top:109px;font-size:14.9px;color:#454c58;letter-spacing:0.54px;">View Records From</div>
<div class="t" style="left:1609.3px;top:139px;font-size:13.6px;color:#343c46;letter-spacing:0.47px;">30-Day History</div>
<div class="t" style="left:1464.9px;top:237px;font-size:25px;color:#000;letter-spacing:0.08px;font-weight:700;">Emails</div>
<div class="t" style="left:1464.9px;top:267px;font-size:25px;color:#000;letter-spacing:0.15px;font-weight:700;">Reported</div>
<div class="t s4" style="left:1670.0px;top:237px;font-size:25px;color:#000;letter-spacing:0.06px;">141,740</div>
<div class="t s4" style="left:1777.4px;top:237px;font-size:25px;color:#000;letter-spacing:-0.24px;">100%</div>
<div class="t" style="left:1487.0px;top:324px;font-size:17px;color:#111;letter-spacing:0.61px;">Compliant</div>
<div class="t" style="left:1669.8px;top:324px;font-size:17px;color:#111;letter-spacing:0.60px;">139,918</div>
<div class="t" style="left:1778.0px;top:324px;font-size:17px;color:#111;letter-spacing:0.15px;">99%</div>
<div class="t" style="left:1486.0px;top:366px;font-size:17px;color:#111;letter-spacing:0.76px;">Non-Compliant</div>
<div class="t" style="left:1669.8px;top:366px;font-size:17px;color:#111;letter-spacing:0.53px;">1,822</div>
<div class="t" style="left:1777.0px;top:366px;font-size:17px;color:#111;letter-spacing:1.15px;">1%</div>
<div class="t" style="left:1487.0px;top:409px;font-size:17px;color:#111;letter-spacing:0.69px;">Threat/Unknown</div>
<div class="t" style="left:1670.8px;top:409px;font-size:17px;color:#111;letter-spacing:0.40px;">692</div>
<div class="t" style="left:1778.0px;top:409px;font-size:17px;color:#111;letter-spacing:0.15px;">0%</div>
<div class="t" style="left:1486.0px;top:451px;font-size:17px;color:#111;letter-spacing:0.74px;">Forwarded</div>
<div class="t" style="left:1670.8px;top:451px;font-size:17px;color:#111;letter-spacing:0.28px;">3,250</div>
<div class="t" style="left:1778.0px;top:451px;font-size:17px;color:#111;letter-spacing:0.15px;">2%</div>
<div class="t s3" style="left:81.9px;top:575px;font-size:25.3px;color:#1a0b40;letter-spacing:0.02px;">Email Sources</div>
<div class="t" style="left:924.6px;top:584px;font-size:14px;color:#5d646e;letter-spacing:-0.18px;">Search IPs or Source</div>
<div class="t" style="left:1309.6px;top:584px;font-size:14px;color:#343c46;letter-spacing:0.31px;">All Statuses</div>
<div class="t" style="left:1604.5px;top:583px;font-size:15.7px;color:#222;letter-spacing:0.20px;">Collapse View</div>
<div class="t s5" style="left:1794.1px;top:583px;font-size:15.7px;color:#fff;letter-spacing:0.40px;">Export</div>
<div class="t" style="left:99.9px;top:648px;font-size:17px;color:#222;letter-spacing:0.50px;">Click on the IP address to open more information. Hover over the</div>
<div class="t" style="left:646.8px;top:648px;font-size:17px;color:#222;letter-spacing:0.58px;">icon to learn more about the particular issues associated with the IP.</div>
<div class="t s7" style="left:111.2px;top:699px;font-size:16px;color:#212529;letter-spacing:-0.90px;">SOURCE</div>
<div class="t s7" style="left:606.2px;top:699px;font-size:16px;color:#212529;letter-spacing:-0.35px;">EMAILS REPORTED</div>
<div class="t s7" style="left:914.3px;top:699px;font-size:16px;color:#212529;letter-spacing:-0.13px;">DMARC COMPLIANCE</div>
<div class="t s7" style="left:1259.3px;top:699px;font-size:16px;color:#212529;letter-spacing:-0.35px;">SPF COMPLIANCE</div>
<div class="t s7" style="left:1548.4px;top:699px;font-size:16px;color:#212529;letter-spacing:-0.08px;">DKIM COMPLIANCE</div>
<div class="t" style="left:140.9px;top:744px;font-size:17px;color:#5b5cf2;letter-spacing:0.04px;">Google.com</div>
<div class="t" style="left:606.8px;top:745px;font-size:17px;color:#212529;letter-spacing:0.47px;">91,243</div>
<div class="t" style="left:936.3px;top:745px;font-size:17px;color:#212529;letter-spacing:0.90px;">98%</div>
<div class="t" style="left:1280.3px;top:745px;font-size:17px;color:#212529;letter-spacing:0.70px;">96%</div>
<div class="t" style="left:1570.8px;top:745px;font-size:17px;color:#212529;letter-spacing:0.55px;">98%</div>
<div class="t" style="left:120.6px;top:807px;font-size:17px;color:#212529;letter-spacing:0.49px;">IP Address</div>
<div class="t" style="left:374.7px;top:807px;font-size:17px;color:#212529;letter-spacing:0.54px;">Location</div>
<div class="t" style="left:689.1px;top:807px;font-size:17px;color:#212529;letter-spacing:0.59px;">Reported On</div>
<div class="t" style="left:859.7px;top:807px;font-size:17px;color:#212529;letter-spacing:0.48px;">Emails</div>
<div class="t" style="left:933.9px;top:807px;font-size:17px;color:#212529;letter-spacing:0.42px;">Header From</div>
<div class="t" style="left:1211.6px;top:807px;font-size:17px;color:#212529;letter-spacing:0.63px;">Return-Path</div>
<div class="t" style="left:1211.7px;top:832px;font-size:17px;color:#212529;letter-spacing:0.30px;">From</div>
<div class="t" style="left:1370.0px;top:807px;font-size:17px;color:#212529;letter-spacing:0.79px;">DKIM</div>
<div class="t" style="left:1370.0px;top:832px;font-size:17px;color:#212529;letter-spacing:0.75px;">Result</div>
<div class="t" style="left:1488.2px;top:807px;font-size:17px;color:#212529;letter-spacing:-0.90px;">SPF</div>
<div class="t" style="left:1487.2px;top:832px;font-size:17px;color:#212529;letter-spacing:0.73px;">Result</div>
<div class="t" style="left:1593.7px;top:807px;font-size:17px;color:#212529;letter-spacing:0.67px;">Disposition</div>
<div class="t" style="left:1738.9px;top:807px;font-size:17px;color:#212529;letter-spacing:0.25px;">XML</div>
<div class="t" style="left:1737.9px;top:832px;font-size:17px;color:#212529;letter-spacing:0.98px;">Export</div>
<div class="t" style="left:126.5px;top:880px;font-size:17px;color:#5b5cf2;letter-spacing:0.30px;">57.235.23.166</div>
<div class="t" style="left:128.8px;top:908px;font-size:12.9px;color:#222;letter-spacing:0.21px;">Amazon.com</div>
<div class="t" style="left:399.7px;top:879px;font-size:17px;color:#212529;letter-spacing:0.62px;">United States</div>
<div class="t" style="left:689.1px;top:879px;font-size:17px;color:#212529;letter-spacing:0.78px;">10-27-25 07:59</div>
<div class="t" style="left:689.1px;top:904px;font-size:17px;color:#212529;letter-spacing:1.06px;">PM</div>
<div class="t" style="left:860.7px;top:879px;font-size:17px;color:#212529;letter-spacing:0.55px;">205</div>
<div class="t" style="left:959.8px;top:880px;font-size:17px;color:#212529;letter-spacing:-0.04px;">samplesite.com</div>
<div class="t" style="left:1391.6px;top:879px;font-size:17px;color:#212529;letter-spacing:0.15px;">Passed</div>
<div class="t" style="left:1509.0px;top:879px;font-size:17px;color:#212529;letter-spacing:0.19px;">Passed</div>
<div class="t s7" style="left:1594.4px;top:880px;font-size:16.8px;color:#000;letter-spacing:0.91px;">None</div>
<div class="t" style="left:260.7px;top:748px;font-size:12px;color:#fff;letter-spacing:0.89px;font-weight:700;">1054</div>
<div class="t" style="left:682.8px;top:944px;font-size:25.3px;color:#f3f1f7;letter-spacing:0.11px;">© 2024 Validify. All Rights Reserved.</div>
<div class="t s6" style="left:1542.1px;top:944px;font-size:25.3px;color:#fff;letter-spacing:0.14px;">Privacy Policy</div>
<div class="t s6" style="left:1715.6px;top:944px;font-size:25.3px;color:#fff;">|</div>
<div class="t s6" style="left:1738.6px;top:944px;font-size:25.3px;color:#fff;letter-spacing:0.21px;">Terms of Service</div>
</body></html>
